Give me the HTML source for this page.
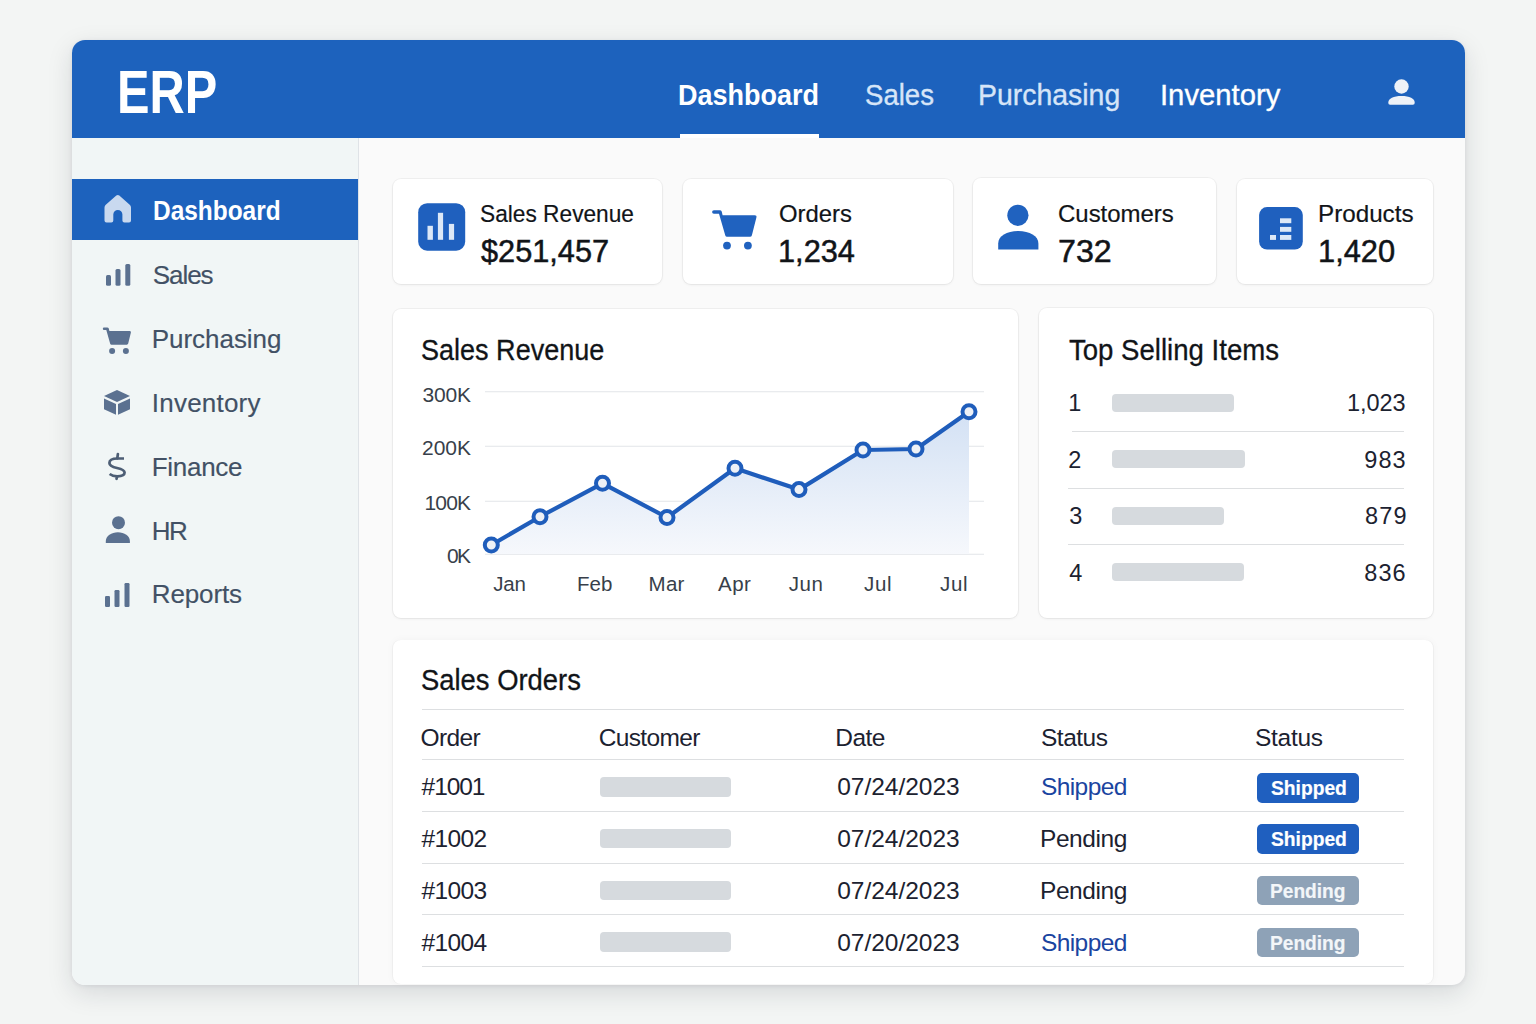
<!DOCTYPE html>
<html><head><meta charset="utf-8"><title>ERP Dashboard</title>
<style>
*{box-sizing:border-box}
html,body{margin:0;padding:0}
body{width:1536px;height:1024px;background:#f3f5f4;position:relative;overflow:hidden;font-family:"Liberation Sans",sans-serif}
.abs{position:absolute}
.t{position:absolute;white-space:nowrap;font-family:"Liberation Sans",sans-serif}
.app{position:absolute;left:72px;top:40px;width:1393px;height:945px;border-radius:13px;background:#fafafa;box-shadow:0 8px 26px rgba(20,30,50,.13),0 1px 4px rgba(20,30,50,.08);overflow:hidden}
.hdr{position:absolute;left:0;top:0;width:1393px;height:98px;background:#1d62bd}
.side{position:absolute;left:0;top:98px;width:287px;height:847px;background:#f1f6f6;border-right:1px solid #dfe3e7}
.card{position:absolute;background:#fff;border-radius:8px;box-shadow:0 0 0 1px rgba(0,0,0,.04),0 1px 3px rgba(0,0,0,.06)}
.bar{position:absolute;background:#d6dade;border-radius:4px}
.line{position:absolute;height:1px;background:#dddfe1}
.badge{position:absolute;border-radius:5px}
</style></head><body>
<div class="app">
  <div class="hdr"></div>
  <div class="side"></div>
</div>
<!-- nav underline -->
<div class="abs" style="left:680px;top:134px;width:139px;height:4px;background:#fff"></div>
<!-- active sidebar -->
<div class="abs" style="left:72px;top:179px;width:286px;height:61px;background:#1d62bd"></div>

<!-- cards -->
<div class="card" style="left:393px;top:179px;width:269px;height:105px"></div>
<div class="card" style="left:683px;top:179px;width:270px;height:105px"></div>
<div class="card" style="left:973px;top:178px;width:243px;height:106px"></div>
<div class="card" style="left:1237px;top:179px;width:196px;height:105px"></div>
<div class="card" style="left:393px;top:309px;width:625px;height:309px"></div>
<div class="card" style="left:1039px;top:308px;width:394px;height:310px"></div>
<div class="card" style="left:393px;top:640px;width:1040px;height:344px;box-shadow:0 0 8px rgba(0,0,0,.035),1px 0 0 rgba(0,0,0,.03),-1px 0 0 rgba(0,0,0,.03)"></div>

<!-- top selling bars & lines -->
<div class="bar" style="left:1112px;top:393.5px;width:122px;height:18px"></div>
<div class="bar" style="left:1112px;top:449.6px;width:133px;height:18px"></div>
<div class="bar" style="left:1112px;top:507.3px;width:112px;height:18px"></div>
<div class="bar" style="left:1112px;top:562.7px;width:132px;height:18px"></div>
<div class="line" style="left:1072px;top:431px;width:332px"></div>
<div class="line" style="left:1068px;top:488px;width:336px"></div>
<div class="line" style="left:1068px;top:544px;width:336px"></div>

<!-- table lines -->
<div class="line" style="left:421.6px;top:709px;width:982px"></div>
<div class="line" style="left:421.6px;top:759px;width:982px"></div>
<div class="line" style="left:421.6px;top:811px;width:982px"></div>
<div class="line" style="left:421.6px;top:863px;width:982px"></div>
<div class="line" style="left:421.6px;top:914px;width:982px"></div>
<div class="line" style="left:421.6px;top:966px;width:982px"></div>
<!-- customer bars -->
<div class="bar" style="left:600px;top:777px;width:131px;height:20px"></div>
<div class="bar" style="left:600px;top:828.8px;width:131px;height:19.5px"></div>
<div class="bar" style="left:600px;top:880.5px;width:131px;height:19.5px"></div>
<div class="bar" style="left:600px;top:932px;width:131px;height:19.5px"></div>
<!-- badges -->
<div class="badge" style="left:1257px;top:773px;width:101.5px;height:30px;background:#1f5fbf"></div>
<div class="badge" style="left:1257px;top:824.3px;width:101.5px;height:29.5px;background:#1f5fbf"></div>
<div class="badge" style="left:1257px;top:875.7px;width:101.5px;height:29.2px;background:#8ea2b7"></div>
<div class="badge" style="left:1257px;top:928.2px;width:101.5px;height:28.8px;background:#8ea2b7"></div>

<!-- icons -->
<svg class="abs" style="left:0;top:0" width="1536" height="1024" viewBox="0 0 1536 1024">
  <!-- header user -->
  <g fill="#eef2f8">
    <circle cx="1401.5" cy="86.5" r="7.2"/>
    <path d="M1388.3 102.5 C1388.3 98.3 1393.5 95.9 1401.5 95.9 C1409.5 95.9 1414.7 98.3 1414.7 102.5 V103 Q1414.7 104.8 1412.9 104.8 H1390.1 Q1388.3 104.8 1388.3 103 Z"/>
  </g>
  <!-- home (active) -->
  <path fill="#c9d9ef" d="M104.5 207.5 Q104.5 206 105.5 205 L116.3 195.6 Q117.8 194.3 119.3 195.6 L130 205 Q131 206 131 207.5 V220.6 Q131 222.6 129 222.6 H124.4 Q122.4 222.6 122.4 220.6 V214.5 A4.55 4.55 0 0 0 113.3 214.5 V220.6 Q113.3 222.6 111.3 222.6 H106.5 Q104.5 222.6 104.5 220.6 Z"/>
  <g fill="#5b7190">
    <!-- sales bars -->
    <rect x="106" y="275" width="5" height="10.7" rx="1.5"/>
    <rect x="115.5" y="269" width="5" height="16.7" rx="1.5"/>
    <rect x="125.3" y="264" width="5" height="21.7" rx="1.5"/>
    <!-- cart -->
    <path d="M104 327.4 H107.2 Q108.4 327.4 108.8 328.5 L109.4 330.9 H129.8 Q131.3 330.9 130.9 332.4 L128.2 343.6 Q127.9 344.7 126.8 344.7 H111.5 Q110.5 344.7 110.2 343.7 L106.3 329.9 H104 Q102.8 329.9 102.8 328.65 Q102.8 327.4 104 327.4 Z"/>
    <circle cx="112.1" cy="350.9" r="3"/><circle cx="125.9" cy="350.9" r="3"/>
    <!-- cube -->
    <path d="M117 390 l13 6 l-13 6 l-13 -6 z"/>
    <path d="M104 398.5 l12 5.5 v10.7 l-12 -5.5 z"/>
    <path d="M130 398.5 l-12 5.5 v10.7 l12 -5.5 z"/>
    <!-- person -->
    <circle cx="118.5" cy="522.7" r="6.5"/>
    <path d="M105.8 543 V541 C105.8 535.8 111.5 532.2 117.9 532.2 C124.3 532.2 129.9 535.8 129.9 541 V543 Z"/>
    <!-- reports bars -->
    <rect x="105" y="596" width="5" height="11" rx="1.2"/>
    <rect x="114.5" y="590" width="5" height="17" rx="1.2"/>
    <rect x="124.5" y="583" width="5" height="24" rx="1.2"/>
  </g>
  <!-- $ -->
  <g fill="none" stroke="#4d5e75" stroke-width="2.7" stroke-linecap="round">
    <path stroke-linecap="butt" d="M124 458.5 H117.5 C112.3 458.5 109.4 460.3 109.4 463 C109.4 466 112.5 467 117 468 C121.5 469 124.6 470.2 124.6 472.6 C124.6 475 122 476.3 117.3 476.3 C113.8 476.3 111.2 475.2 109.6 474"/>
    <path d="M117.9 454 L117.3 458.3"/><path d="M117.1 476.5 L116.5 478.8"/>
  </g>

  <!-- stat icon 1 -->
  <rect x="418.2" y="203.2" width="47" height="47.5" rx="9" fill="#1f60be"/>
  <g fill="#dce8f7">
    <rect x="427.5" y="225.8" width="5.4" height="14"/>
    <rect x="437.9" y="212.8" width="5.2" height="27"/>
    <rect x="448.9" y="223.9" width="5.2" height="15.9"/>
  </g>
  <!-- cart blue -->
  <g fill="#2062bf">
    <path d="M713.9 210.2 H719.8 Q721.3 210.2 721.7 211.6 L722.6 215.2 H754.6 Q757 215.2 756.4 217.6 L751.9 235.3 Q751.5 236.8 750 236.8 H727 Q725.7 236.8 725.3 235.5 L719 213.7 H713.9 Q712.1 213.7 712.1 211.95 Q712.1 210.2 713.9 210.2 Z"/>
    <circle cx="727" cy="245.6" r="3.9"/><circle cx="747.9" cy="245.6" r="3.9"/>
  </g>
  <!-- person blue -->
  <g fill="#2062bf">
    <circle cx="1017.9" cy="215.3" r="10.6"/>
    <path d="M998.2 249.5 V243.5 C998.2 236 1007 231.1 1018.3 231.1 C1029.6 231.1 1038.4 236 1038.4 243.5 V249.5 Z"/>
  </g>
  <!-- products icon -->
  <rect x="1259.1" y="207.1" width="43.7" height="42.5" rx="8" fill="#1f60be"/>
  <g fill="#dce8f7">
    <rect x="1280" y="218.3" width="11.3" height="4.9"/>
    <rect x="1280" y="226.9" width="11.3" height="4.9"/>
    <rect x="1280" y="235" width="11.3" height="4.9"/>
    <rect x="1270" y="235" width="6" height="4.9"/>
  </g>

  <!-- chart -->
  <defs>
    <linearGradient id="ag" x1="0" y1="0" x2="0" y2="1">
      <stop offset="0" stop-color="#d3e1f4"/>
      <stop offset="1" stop-color="#f6f8fc"/>
    </linearGradient>
  </defs>
  <g stroke="#e2e5e8" stroke-width="1.1">
    <line x1="485" y1="391.7" x2="984" y2="391.7"/>
    <line x1="485" y1="446.2" x2="984" y2="446.2"/>
    <line x1="485" y1="501.2" x2="984" y2="501.2"/>
    <line x1="485" y1="554.2" x2="984" y2="554.2"/>
  </g>
  <path fill="url(#ag)" d="M491.3 545 L540 516.7 L602.5 483.3 L667 517.5 L735 468.3 L799 489.6 L863 450 L916 449 L969 411.7 L969 554 L491.3 554 Z"/>
  <polyline fill="none" stroke="#1f5dbb" stroke-width="4.2" stroke-linejoin="round" points="491.3,545 540,516.7 602.5,483.3 667,517.5 735,468.3 799,489.6 863,450 916,449 969,411.7"/>
  <g fill="#eef1f6" stroke="#1f5dbb" stroke-width="4">
    <circle cx="491.3" cy="545" r="6.5"/><circle cx="540" cy="516.7" r="6.5"/><circle cx="602.5" cy="483.3" r="6.5"/>
    <circle cx="667" cy="517.5" r="6.5"/><circle cx="735" cy="468.3" r="6.5"/><circle cx="799" cy="489.6" r="6.5"/>
    <circle cx="863" cy="450" r="6.5"/><circle cx="916" cy="449" r="6.5"/><circle cx="969" cy="411.7" r="6.5"/>
  </g>
</svg>
<span class="t" style="left:116.8px;top:61.5px;font-size:61px;line-height:61px;font-weight:700;color:#ffffff;transform:scaleX(0.7984);transform-origin:0 0">ERP</span>
<span class="t" style="left:678.1px;top:79.6px;font-size:30px;line-height:30px;font-weight:700;color:#ffffff;transform:scaleX(0.8998);transform-origin:0 0">Dashboard</span>
<span class="t" style="left:865.4px;top:79.8px;font-size:30px;line-height:30px;font-weight:400;color:#d6e5f8;-webkit-text-stroke:0.35px #d6e5f8;transform:scaleX(0.9186);transform-origin:0 0">Sales</span>
<span class="t" style="left:977.9px;top:79.8px;font-size:30px;line-height:30px;font-weight:400;color:#d6e5f8;-webkit-text-stroke:0.35px #d6e5f8;transform:scaleX(0.9474);transform-origin:0 0">Purchasing</span>
<span class="t" style="left:1159.8px;top:79.8px;font-size:30px;line-height:30px;font-weight:400;color:#ffffff;-webkit-text-stroke:0.35px #ffffff;transform:scaleX(0.9745);transform-origin:0 0">Inventory</span>
<span class="t" style="left:152.7px;top:197.5px;font-size:27px;line-height:27px;font-weight:700;color:#ffffff;transform:scaleX(0.9052);transform-origin:0 0">Dashboard</span>
<span class="t" style="left:152.8px;top:261.8px;font-size:26px;line-height:26px;font-weight:400;color:#425165;-webkit-text-stroke:0.15px #425165;letter-spacing:-1.06px">Sales</span>
<span class="t" style="left:151.8px;top:326.0px;font-size:26px;line-height:26px;font-weight:400;color:#425165;-webkit-text-stroke:0.15px #425165;letter-spacing:-0.05px">Purchasing</span>
<span class="t" style="left:151.8px;top:390.0px;font-size:26px;line-height:26px;font-weight:400;color:#425165;-webkit-text-stroke:0.15px #425165;letter-spacing:0.22px">Inventory</span>
<span class="t" style="left:151.8px;top:454.0px;font-size:26px;line-height:26px;font-weight:400;color:#425165;-webkit-text-stroke:0.15px #425165;letter-spacing:-0.31px">Finance</span>
<span class="t" style="left:151.8px;top:518.0px;font-size:26px;line-height:26px;font-weight:400;color:#425165;-webkit-text-stroke:0.15px #425165;letter-spacing:-1.58px">HR</span>
<span class="t" style="left:151.8px;top:581.4px;font-size:26px;line-height:26px;font-weight:400;color:#425165;-webkit-text-stroke:0.15px #425165;letter-spacing:-0.14px">Reports</span>
<span class="t" style="left:479.6px;top:201.5px;font-size:24.5px;line-height:24.5px;font-weight:400;color:#111418;-webkit-text-stroke:0.2px #111418;transform:scaleX(0.9268);transform-origin:0 0">Sales Revenue</span>
<span class="t" style="left:480.5px;top:236.0px;font-size:31px;line-height:31px;font-weight:400;color:#111418;-webkit-text-stroke:0.5px #111418;transform:scaleX(0.9902);transform-origin:0 0">$251,457</span>
<span class="t" style="left:779.3px;top:201.5px;font-size:24.5px;line-height:24.5px;font-weight:400;color:#111418;-webkit-text-stroke:0.2px #111418;transform:scaleX(0.9738);transform-origin:0 0">Orders</span>
<span class="t" style="left:778.3px;top:236.0px;font-size:31px;line-height:31px;font-weight:400;color:#111418;-webkit-text-stroke:0.5px #111418;transform:scaleX(0.9916);transform-origin:0 0">1,234</span>
<span class="t" style="left:1058.3px;top:201.8px;font-size:24.5px;line-height:24.5px;font-weight:400;color:#111418;-webkit-text-stroke:0.2px #111418;transform:scaleX(0.9779);transform-origin:0 0">Customers</span>
<span class="t" style="left:1058.3px;top:236.0px;font-size:31px;line-height:31px;font-weight:400;color:#111418;-webkit-text-stroke:0.5px #111418;transform:scaleX(1.0388);transform-origin:0 0">732</span>
<span class="t" style="left:1317.7px;top:201.8px;font-size:24.5px;line-height:24.5px;font-weight:400;color:#111418;-webkit-text-stroke:0.2px #111418;transform:scaleX(0.9880);transform-origin:0 0">Products</span>
<span class="t" style="left:1317.7px;top:236.0px;font-size:31px;line-height:31px;font-weight:400;color:#111418;-webkit-text-stroke:0.5px #111418;transform:scaleX(0.9942);transform-origin:0 0">1,420</span>
<span class="t" style="left:421.1px;top:335.7px;font-size:29px;line-height:29px;font-weight:400;color:#111418;-webkit-text-stroke:0.3px #111418;transform:scaleX(0.9319);transform-origin:0 0">Sales Revenue</span>
<span class="t" style="left:422.5px;top:384.0px;font-size:21px;line-height:21px;font-weight:400;color:#383f4a;letter-spacing:-0.18px">300K</span>
<span class="t" style="left:422.0px;top:437.4px;font-size:21px;line-height:21px;font-weight:400;color:#383f4a;letter-spacing:0.00px">200K</span>
<span class="t" style="left:424.4px;top:492.4px;font-size:21px;line-height:21px;font-weight:400;color:#383f4a;letter-spacing:-0.81px">100K</span>
<span class="t" style="left:447.0px;top:545.3px;font-size:21px;line-height:21px;font-weight:400;color:#383f4a;letter-spacing:-1.68px">0K</span>
<span class="t" style="left:493.3px;top:573.8px;font-size:20.5px;line-height:20.5px;font-weight:400;color:#383f4a;letter-spacing:-0.28px">Jan</span>
<span class="t" style="left:577.0px;top:573.8px;font-size:20.5px;line-height:20.5px;font-weight:400;color:#383f4a;letter-spacing:0.04px">Feb</span>
<span class="t" style="left:648.6px;top:573.8px;font-size:20.5px;line-height:20.5px;font-weight:400;color:#383f4a;letter-spacing:0.26px">Mar</span>
<span class="t" style="left:718.0px;top:573.8px;font-size:20.5px;line-height:20.5px;font-weight:400;color:#383f4a;letter-spacing:0.46px">Apr</span>
<span class="t" style="left:788.8px;top:573.8px;font-size:20.5px;line-height:20.5px;font-weight:400;color:#383f4a;letter-spacing:0.52px">Jun</span>
<span class="t" style="left:864.0px;top:573.8px;font-size:20.5px;line-height:20.5px;font-weight:400;color:#383f4a;letter-spacing:0.67px">Jul</span>
<span class="t" style="left:940.0px;top:573.8px;font-size:20.5px;line-height:20.5px;font-weight:400;color:#383f4a;letter-spacing:0.67px">Jul</span>
<span class="t" style="left:1068.7px;top:335.6px;font-size:29px;line-height:29px;font-weight:400;color:#111418;-webkit-text-stroke:0.3px #111418;transform:scaleX(0.9509);transform-origin:0 0">Top Selling Items</span>
<span class="t" style="left:1068.3px;top:391.6px;font-size:23.5px;line-height:23.5px;font-weight:400;color:#1c2230;letter-spacing:0.00px">1</span>
<span class="t" style="left:1347.0px;top:391.6px;font-size:23.5px;line-height:23.5px;font-weight:400;color:#1c2230;letter-spacing:-0.03px">1,023</span>
<span class="t" style="left:1068.3px;top:448.6px;font-size:23.5px;line-height:23.5px;font-weight:400;color:#1c2230;letter-spacing:0.00px">2</span>
<span class="t" style="left:1364.3px;top:448.6px;font-size:23.5px;line-height:23.5px;font-weight:400;color:#1c2230;letter-spacing:1.08px">983</span>
<span class="t" style="left:1069.3px;top:505.0px;font-size:23.5px;line-height:23.5px;font-weight:400;color:#1c2230;letter-spacing:0.00px">3</span>
<span class="t" style="left:1365.0px;top:505.0px;font-size:23.5px;line-height:23.5px;font-weight:400;color:#1c2230;letter-spacing:1.23px">879</span>
<span class="t" style="left:1069.3px;top:561.5px;font-size:23.5px;line-height:23.5px;font-weight:400;color:#1c2230;letter-spacing:0.00px">4</span>
<span class="t" style="left:1364.3px;top:561.5px;font-size:23.5px;line-height:23.5px;font-weight:400;color:#1c2230;letter-spacing:1.08px">836</span>
<span class="t" style="left:420.7px;top:664.6px;font-size:29.5px;line-height:29.5px;font-weight:400;color:#111418;-webkit-text-stroke:0.3px #111418;transform:scaleX(0.9290);transform-origin:0 0">Sales Orders</span>
<span class="t" style="left:420.6px;top:725.8px;font-size:24.5px;line-height:24.5px;font-weight:400;color:#1c2230;letter-spacing:-0.64px">Order</span>
<span class="t" style="left:598.7px;top:725.8px;font-size:24.5px;line-height:24.5px;font-weight:400;color:#1c2230;letter-spacing:-0.65px">Customer</span>
<span class="t" style="left:835.2px;top:725.8px;font-size:24.5px;line-height:24.5px;font-weight:400;color:#1c2230;letter-spacing:-0.48px">Date</span>
<span class="t" style="left:1041.0px;top:725.8px;font-size:24.5px;line-height:24.5px;font-weight:400;color:#1c2230;letter-spacing:-0.50px">Status</span>
<span class="t" style="left:1255.0px;top:725.8px;font-size:24.5px;line-height:24.5px;font-weight:400;color:#1c2230;letter-spacing:-0.28px">Status</span>
<span class="t" style="left:421.6px;top:775.2px;font-size:24.5px;line-height:24.5px;font-weight:400;color:#1c2230;letter-spacing:-1.08px">#1001</span>
<span class="t" style="left:837.2px;top:775.2px;font-size:24.5px;line-height:24.5px;font-weight:400;color:#1c2230;letter-spacing:-0.02px">07/24/2023</span>
<span class="t" style="left:1041.0px;top:775.2px;font-size:24.5px;line-height:24.5px;font-weight:400;color:#1a44a0;letter-spacing:-0.60px">Shipped</span>
<span class="t" style="left:421.6px;top:826.8px;font-size:24.5px;line-height:24.5px;font-weight:400;color:#1c2230;letter-spacing:-0.63px">#1002</span>
<span class="t" style="left:837.2px;top:826.8px;font-size:24.5px;line-height:24.5px;font-weight:400;color:#1c2230;letter-spacing:-0.02px">07/24/2023</span>
<span class="t" style="left:1040.0px;top:826.8px;font-size:24.5px;line-height:24.5px;font-weight:400;color:#1c2230;letter-spacing:-0.43px">Pending</span>
<span class="t" style="left:421.6px;top:879.2px;font-size:24.5px;line-height:24.5px;font-weight:400;color:#1c2230;letter-spacing:-0.63px">#1003</span>
<span class="t" style="left:837.2px;top:879.2px;font-size:24.5px;line-height:24.5px;font-weight:400;color:#1c2230;letter-spacing:-0.02px">07/24/2023</span>
<span class="t" style="left:1040.0px;top:879.2px;font-size:24.5px;line-height:24.5px;font-weight:400;color:#1c2230;letter-spacing:-0.43px">Pending</span>
<span class="t" style="left:421.6px;top:930.9px;font-size:24.5px;line-height:24.5px;font-weight:400;color:#1c2230;letter-spacing:-0.63px">#1004</span>
<span class="t" style="left:837.2px;top:930.9px;font-size:24.5px;line-height:24.5px;font-weight:400;color:#1c2230;letter-spacing:-0.02px">07/20/2023</span>
<span class="t" style="left:1041.0px;top:930.9px;font-size:24.5px;line-height:24.5px;font-weight:400;color:#1a44a0;letter-spacing:-0.60px">Shipped</span>
<span class="t" style="left:1270.7px;top:778.1px;font-size:20px;line-height:20px;font-weight:700;color:#ffffff;-webkit-text-stroke:0.2px #ffffff;transform:scaleX(0.9618);transform-origin:0 0">Shipped</span>
<span class="t" style="left:1270.7px;top:829.3px;font-size:20px;line-height:20px;font-weight:700;color:#ffffff;-webkit-text-stroke:0.2px #ffffff;transform:scaleX(0.9618);transform-origin:0 0">Shipped</span>
<span class="t" style="left:1270.4px;top:880.6px;font-size:20px;line-height:20px;font-weight:700;color:#f3f6f9;-webkit-text-stroke:0.2px #f3f6f9;transform:scaleX(0.9560);transform-origin:0 0">Pending</span>
<span class="t" style="left:1270.4px;top:932.9px;font-size:20px;line-height:20px;font-weight:700;color:#f3f6f9;-webkit-text-stroke:0.2px #f3f6f9;transform:scaleX(0.9560);transform-origin:0 0">Pending</span>
</body></html>
